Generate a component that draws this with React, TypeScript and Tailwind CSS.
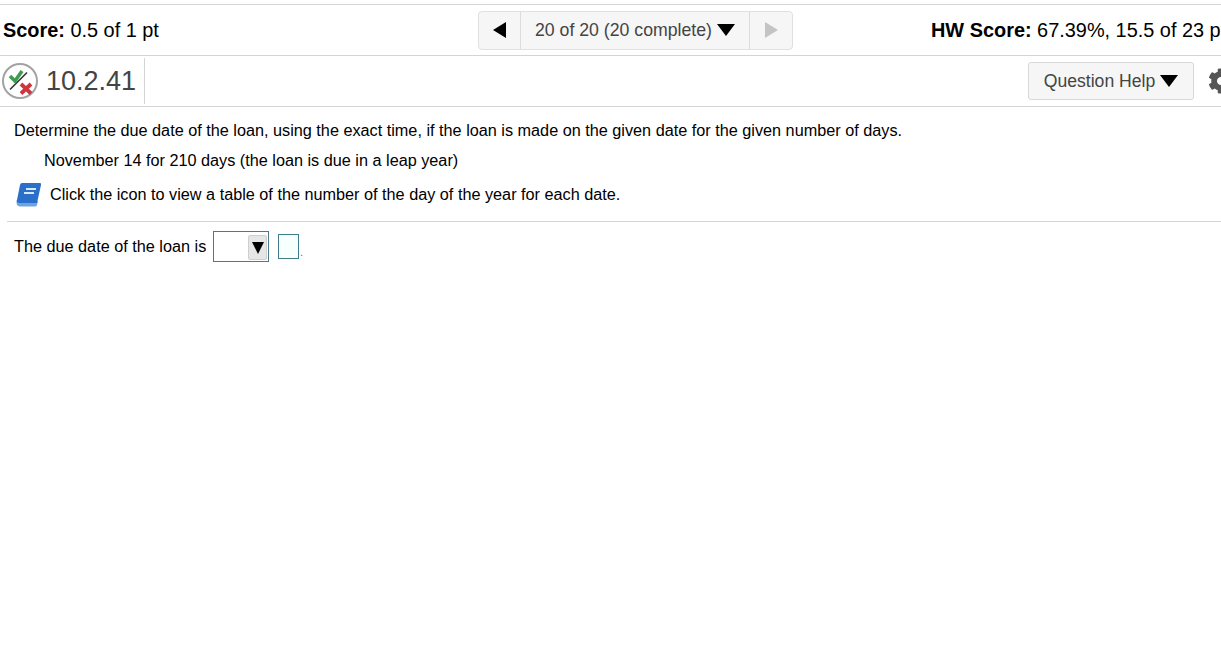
import React from 'react';
import { FaCog } from 'react-icons/fa';

const Triangle = ({ dir, className }: { dir: 'left' | 'right' | 'down'; className: string }) => {
  const points = dir === 'left' ? '13,0 13,16 0,8' : dir === 'right' ? '0,0 13,8 0,16' : '0,0 18,0 9,12';
  const size = dir === 'down' ? 'w-[18px] h-[12px]' : 'w-[13px] h-[16px]';
  return (
    <svg viewBox={dir === 'down' ? '0 0 18 12' : '0 0 13 16'} preserveAspectRatio="none" className={`shrink-0 ${size} ${className}`}>
      <polygon points={points} fill="currentColor" />
    </svg>
  );
};

const StatusIcon = () => (
  <svg viewBox="0 0 36 36" className="w-[36px] h-[36px] shrink-0">
    <circle cx="18" cy="18" r="17" fill="#fff" stroke="#a3a3a3" strokeWidth="2" />
    <line x1="8" y1="26.5" x2="25" y2="9.5" stroke="#333" strokeWidth="1.6" />
    <path d="M8 13 L13 18 L20 8" fill="none" stroke="#3f9b4f" strokeWidth="3.6" />
    <path d="M19 21 L29 30.5 M29 21 L19 30.5" fill="none" stroke="#d0343c" strokeWidth="3.8" />
  </svg>
);

const BookIcon = () => (
  <svg viewBox="0 0 28 28" className="w-[28px] h-[28px] shrink-0">
    <path d="M2.5 20 Q2 26.5 6 26.5 H21 Q22.5 26.5 23 25 L24 21 H5 Z" fill="#6fa3e0" />
    <path d="M8 3 H26 Q27.5 3 27 5 L23 23 H5.5 Q2.5 23 3 20 L6 5 Q6.5 3 8 3 Z" fill="#2a6fc9" />
    <path d="M12 9 H22 M10 13 H20" stroke="#d8e8fa" strokeWidth="2" />
  </svg>
);

export default function App() {
  return (
    <div className="w-[1221px] h-[662px] overflow-hidden bg-white pt-[4px] font-['Liberation_Sans',Arial,sans-serif] text-black">
      <div className="h-[52px] flex items-center border-y border-[#d4d4d4] whitespace-nowrap">
        <div className="w-[478px] shrink-0 pl-[3px] pt-[1px] text-[19.9px]">
          <b>Score:</b> 0.5 of 1 pt
        </div>
        <div className="w-[315px] shrink-0 h-[39px] flex rounded-[4px] border border-[#e0e0e0] bg-[#f6f6f6] text-[#444] text-[17.7px]">
          <div className="w-[42px] flex items-center justify-center border-r border-[#dcdcdc]">
            <Triangle dir="left" className="text-black" />
          </div>
          <div className="w-[229px] flex items-center justify-center gap-[5px] border-r border-[#dcdcdc]">
            <span>20 of 20 (20 complete)</span>
            <Triangle dir="down" className="text-black" />
          </div>
          <div className="flex-1 flex items-center justify-center">
            <Triangle dir="right" className="text-[#c4c4c4]" />
          </div>
        </div>
        <div className="ml-[138px] shrink-0 pt-[1px] text-[19.9px]">
          <b>HW Score:</b> 67.39%, 15.5 of 23 pts
        </div>
      </div>

      <div className="h-[51px] flex items-center border-b border-[#d4d4d4] whitespace-nowrap">
        <div className="w-[145px] shrink-0 h-[46px] flex items-center pl-[2px] border-r border-[#d4d4d4]">
          <StatusIcon />
          <span className="ml-[8px] text-[27px] text-[#444]">10.2.41</span>
        </div>
        <div className="ml-[883px] shrink-0 w-[166px] h-[38px] flex items-center justify-center gap-[5px] rounded-[3px] border border-[#d8d8d8] bg-[#f6f6f6] text-[17.6px] text-[#444]">
          <span>Question Help</span>
          <Triangle dir="down" className="text-black" />
        </div>
        <FaCog className="ml-[14px] shrink-0 text-[#555] w-[26px] h-[26px]" />
      </div>

      <div className="pl-[7px] text-[16.24px] leading-[18px]">
        <p className="pl-[7px] pt-[14px]">
          Determine the due date of the loan, using the exact time, if the loan is made on the given date for the given number of days.
        </p>
        <p className="pl-[37px] pt-[12px]">November 14 for 210 days (the loan is due in a leap year)</p>
        <div className="flex items-center pl-[7px] pt-[9px] pb-[11px] h-[53px] border-b border-[#d4d4d4]">
          <BookIcon />
          <span className="ml-[8px]">Click the icon to view a table of the number of the day of the year for each date.</span>
        </div>
        <div className="flex items-center pl-[7px] pt-[9px]">
          <span className="mb-[2px]">The due date of the loan is</span>
          <div className="ml-[7px] w-[56px] h-[31px] flex justify-end items-start border border-[#4a7a8c] bg-white pt-[3px] pr-px">
            <div className="w-[19px] h-[25px] flex items-center justify-center bg-[#e6e6e6] border border-[#cfcfcf] rounded-[2px]">
              <Triangle dir="down" className="text-black !w-[12px] !h-[12px]" />
            </div>
          </div>
          <div className="ml-[9px] w-[21px] h-[25px] border border-[#3e7d8a] bg-[#f7ffff]" />
          <span className="ml-[1px] text-[#666] text-[10px] self-end">.</span>
        </div>
      </div>
    </div>
  );
}
